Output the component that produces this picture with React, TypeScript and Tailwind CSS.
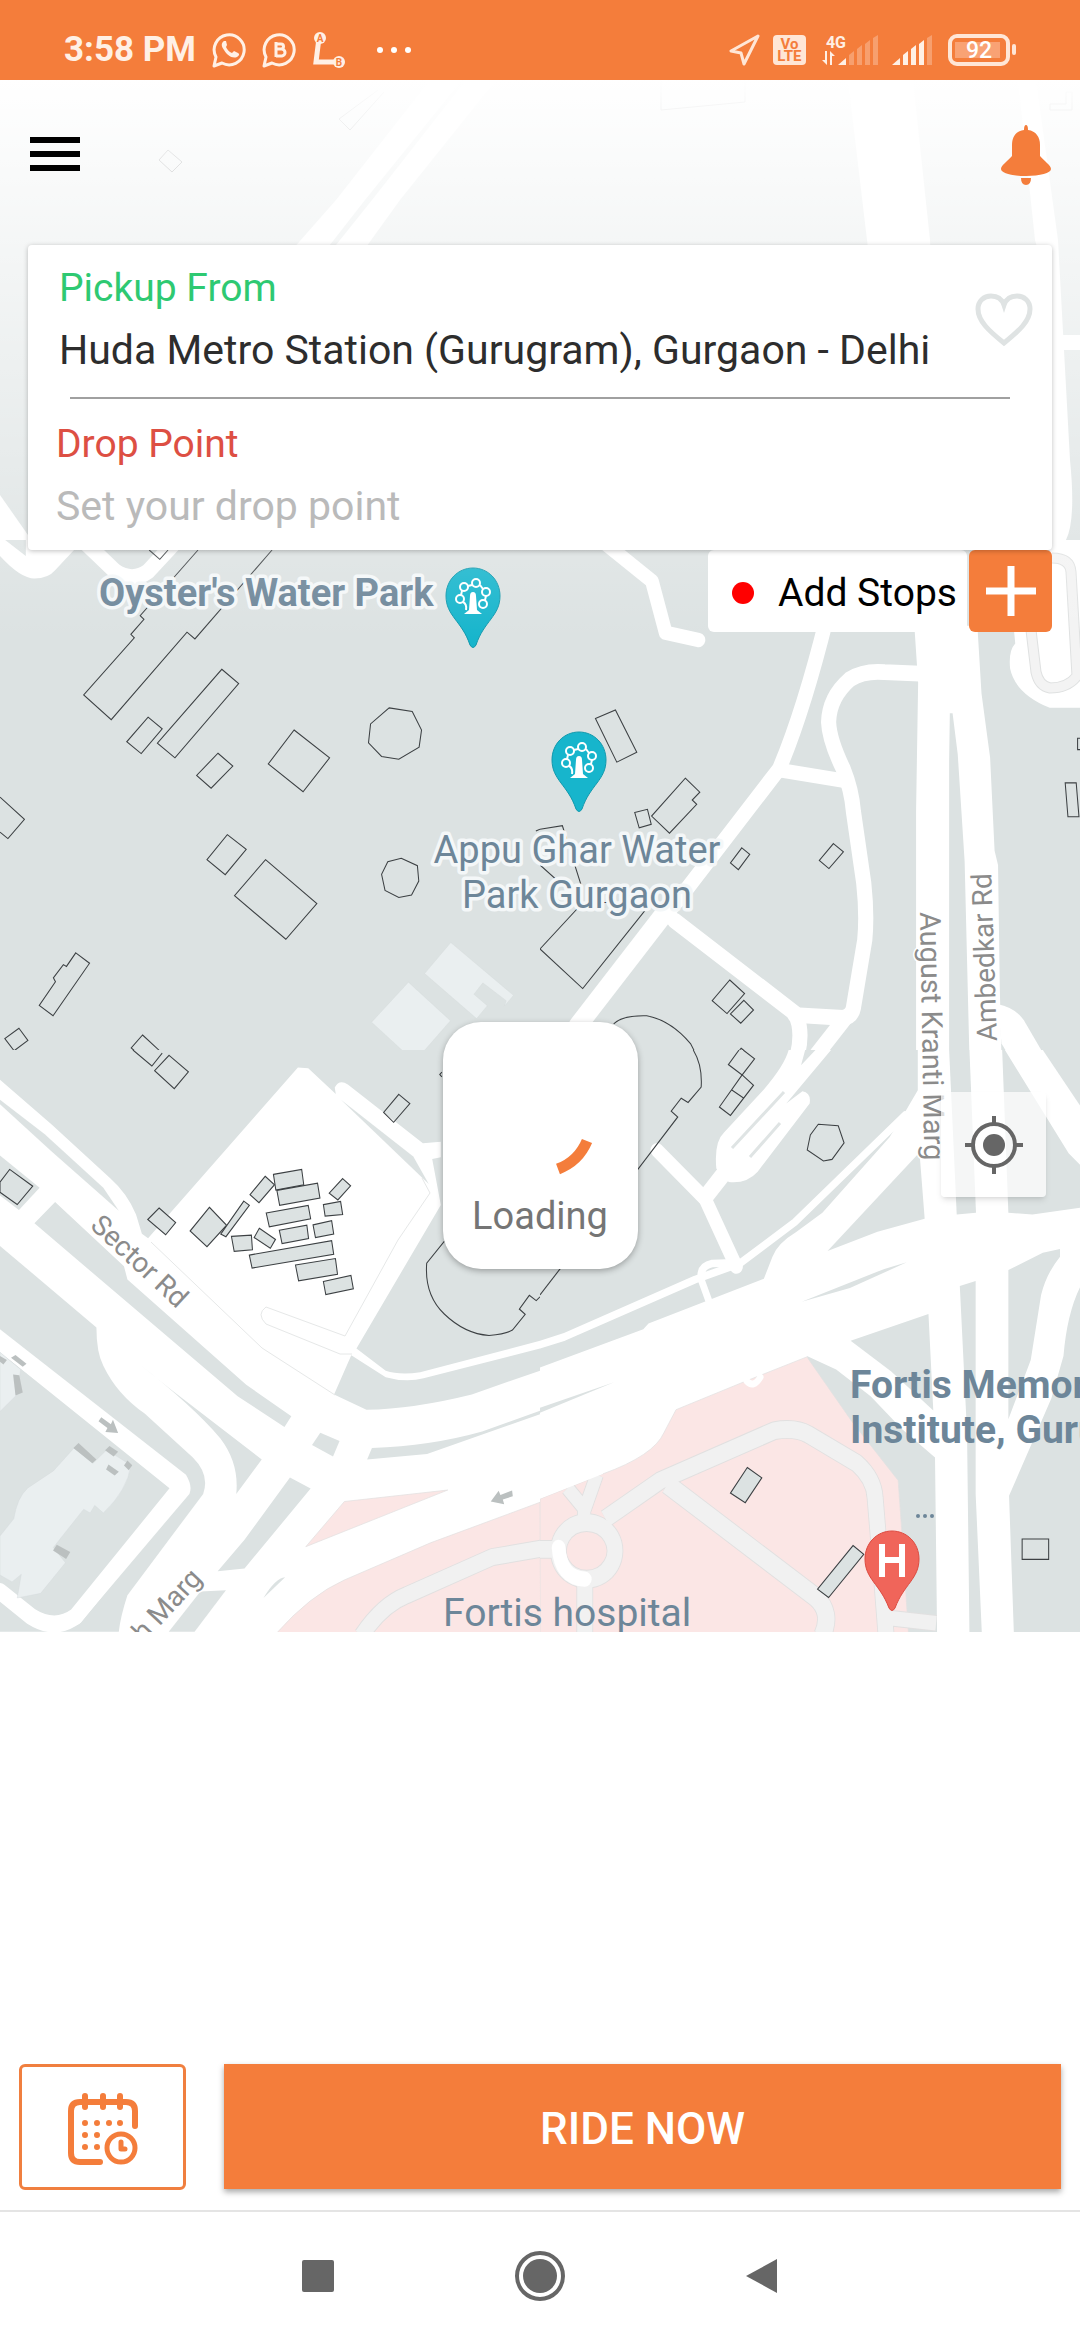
import React, { useState } from 'react';

type Shape = { d: string; width?: number };

interface TileProps {
  x: number;
  y: number;
  width: number;
  height: number;
  base: string;
  land?: string[];
  hospital?: string[];
  hospitalRoads?: Shape[];
  roads?: Shape[];
  areas?: string[];
  blocks?: string[];
  shades?: string[];
  filled?: string[];
  outlines?: string[];
}

const LAND = '#dce2e2';
const PINK = '#fbe6e5';

// Each tile is drawn on its own 1568 x 1568 grid
function Tile({
  x, y, width, height, base,
  land = [], hospital = [], hospitalRoads = [], roads = [], areas = [],
  blocks = [], shades = [], filled = [], outlines = [],
}: TileProps) {
  return (
    <svg x={x} y={y} width={width} height={height} viewBox="0 0 1568 1568" preserveAspectRatio="none">
      <rect width="1568" height="1568" fill={base} />
      {land.map((d) => <path key={d} d={d} fill={LAND} />)}
      {hospital.map((d) => <path key={d} d={d} fill={PINK} stroke="#e2e0e0" strokeWidth="2" />)}
      {hospitalRoads.map((r) => (
        <path key={r.d} d={r.d} fill="none" stroke="#e1e0e0" strokeWidth={(r.width ?? 44) + 5} strokeLinejoin="round" />
      ))}
      {hospitalRoads.map((r) => (
        <path key={r.d + 'f'} d={r.d} fill="none" stroke="#f1f1f1" strokeWidth={r.width ?? 44} strokeLinejoin="round" />
      ))}
      {roads.map((r) => (
        <path key={r.d} d={r.d} fill="none" stroke="#fff" strokeWidth={r.width ?? 44} strokeLinecap="round" strokeLinejoin="round" />
      ))}
      {areas.map((d) => <path key={d} d={d} fill="#fff" />)}
      {blocks.map((d) => <path key={d} d={d} fill="#eaeff0" stroke="#d3d9da" strokeWidth="1" />)}
      {shades.map((d) => <path key={d} d={d} fill="#bbc0c0" />)}
      {filled.map((d) => <path key={d} d={d} fill={LAND} stroke="#3c4043" strokeWidth="3" />)}
      {outlines.map((d) => <path key={d} d={d} fill="none" stroke="#3c4043" strokeWidth="3" />)}
    </svg>
  );
}

function TopTile() {
  return (
    <g>
      <rect y="80" width="1080" height="470" fill={LAND} />
      <g fill="#fff">
        <path d="M336 200 L430 80 H462 L365 200 L326 250 H292Z" />
        <path d="M372 200 L466 80 H496 L400 200 L364 250 H332Z" />
        <path d="M848 80 H913 L930 240 L945 560 H912 L908 550 L867 240Z" />
        <path d="M1018 80 H1036 L1058 240 L1070 460 Q1076 520 1066 540 H1052 V300 L1035 240Z" />
        <path d="M1052 335 H1080 V350 H1052Z" />
        <path d="M0 495 L28 535 V560 H0Z" />
      </g>
      <g fill="none" stroke="#3c4043" strokeWidth="1">
        <path d="M159 160 L168 150 L182 162 L172 172Z" />
        <path d="M378 90 L339 119 L350 130 L384 92" />
        <path d="M661 80 V110 L745 102 V80" />
        <path d="M1050 110 H1072 V92 H1066 V104 H1050Z" />
      </g>
    </g>
  );
}

function ParkPin({ x, y }: { x: number; y: number }) {
  return (
    <g transform={`translate(${x} ${y})`}>
      <path d="M0 0 C-15 0 -27 12 -27 28 C-27 48 -11 53 -3 77 Q0 82 3 77 C11 53 27 48 27 28 C27 12 15 0 0 0Z" fill="#17b5cc" stroke="#1199ad" strokeWidth="1" />
      <g fill="none" stroke="#fff" strokeWidth="2">
        <circle cx="-9" cy="19" r="4" />
        <circle cx="3" cy="15" r="4" />
        <circle cx="13" cy="24" r="4" />
        <circle cx="-13" cy="31" r="4" />
        <circle cx="10" cy="36" r="4" />
        <path d="M-5 18 L-1 17 M7 17 L10 21 M-11 23 L-12 27 M13 28 L12 32 M-10 34 Q-6 36 -7 42" />
      </g>
      <path d="M-3 28 Q-3 24 0 24 Q3 24 3 28 L4 42 L9 46 H-9 L-4 42Z" fill="#fff" />
    </g>
  );
}

function HospitalPin({ x, y }: { x: number; y: number }) {
  return (
    <g transform={`translate(${x} ${y})`}>
      <path d="M0 0 C-15 0 -27 12 -27 28 C-27 48 -12 53 -3 77 Q0 82 3 77 C12 53 27 48 27 28 C27 12 15 0 0 0Z" fill="#f0655a" stroke="#dc4a3f" strokeWidth="1" />
      <path d="M-10 13 V46 M10 13 V46 M-10 29 H10" stroke="#fff" strokeWidth="6" fill="none" />
    </g>
  );
}

function CityMap() {
  return (
    <svg
      className="absolute inset-0 h-full w-full"
      viewBox="0 80 1080 1552"
      preserveAspectRatio="xMidYMin slice"
      role="img"
      aria-label="Map"
    >
      <TopTile />
      <Tile
        x={0} y={540} width={540} height={560} base={LAND}
        areas={['M0 45 Q60 108 100 108 Q140 108 160 85 L215 28 V0 H75 V45 L15 0 H0Z']}
        roads={[{ d: 'M250 10 L335 88 Q385 120 430 88 L505 10' }]}
        blocks={[
          'M1309 1127 L1491 1275 L1465 1305 L1470 1290 L1402 1240 L1376 1272 L1415 1304 L1384 1340 L1233 1214Z',
          'M1186 1238 L1308 1346 L1212 1452 L1186 1430 L1178 1438 L1079 1350Z',
        ]}
        outlines={[
          'M433 28 L464 54 L488 28',
          'M575 28 L407 212 L418 222 L380 264 L390 274 L243 434 L323 503 L543 258 L566 277 L790 28',
          'M644 362 L693 402 L508 610 L457 569Z',
          'M430 496 L471 529 L410 598 L368 565Z',
          'M633 597 L676 633 L613 695 L571 659Z',
          'M854 532 L957 610 L880 705 L779 627Z',
          'M1130 470 L1197 480 L1224 532 L1217 580 L1158 614 L1108 606 L1070 568 L1076 515Z',
          'M1165 891 L1212 912 L1216 955 L1195 994 L1158 1001 L1118 981 L1108 936 L1126 901Z',
          'M0 720 L71 782 L23 836 L0 818',
          'M660 825 L715 866 L654 937 L601 895Z',
          'M771 895 L920 1018 L830 1118 L681 996Z',
          'M220 1156 L260 1185 L154 1332 L114 1303 L161 1237 L155 1226 L184 1189 L193 1194Z',
          'M55 1367 L81 1401 L41 1430 L14 1396Z',
          'M414 1386 L471 1437 L441 1472 L381 1422Z',
          'M1568 810 L1556 815',
        ]}
      />
      <Tile
        x={540} y={540} width={540} height={560} base={LAND}
        roads={[
          { d: 'M190 10 L325 115 L365 260 L460 280', width: 40 },
          { d: 'M832 220 Q765 480 695 640 L400 1010', width: 42 },
          { d: 'M390 1010 L110 1360', width: 54 },
          { d: 'M700 645 L890 675', width: 40 },
          { d: 'M1120 375 L1000 370 Q940 365 900 390 Q840 440 838 510 Q840 560 880 640 Q905 700 910 760 L940 960 Q950 1050 943 1120 L910 1310 Q905 1335 880 1338 L740 1330' },
          { d: 'M390 1065 L740 1325 Q765 1370 748 1440 Q730 1480 640 1568' },
          { d: 'M885 1340 L700 1568' },
        ]}
        areas={[
          'M1087 240 H1270 L1282 430 L1307 610 L1320 870 L1330 910 L1335 1250 L1343 1568 H1250 L1233 900 L1213 600 L1198 485 H1190 L1188 620 V1568 H1092 V760 L1098 400Z',
          'M1330 1300 Q1380 1310 1405 1345 L1540 1568 H1440 L1340 1410Z',
          'M1480 0 H1568 V470 H1480 Q1380 430 1365 360 Q1360 310 1380 290 L1375 240 H1480Z',
        ]}
        outlines={[
          'M161 500 L219 476 L281 594 L223 622Z',
          'M422 667 L464 706 L442 728 L455 740 L376 821 L324 773Z',
          'M275 763 L312 754 L323 796 L288 806Z',
          'M586 862 L609 880 L576 923 L553 904Z',
          'M852 850 L881 873 L839 920 L811 897Z',
          'M551 1232 L594 1270 L543 1326 L500 1290Z',
          'M592 1289 L620 1316 L583 1353 L553 1327Z',
          'M584 1423 L623 1453 L587 1497 L547 1468Z',
          'M214 1355 Q240 1330 310 1332 Q380 1345 437 1410 Q460 1450 463 1480',
          'M0 810 L65 800 L120 968 L75 975 L0 910',
          'M320 1015 H125 L0 1145 L124 1256 L315 1025',
          'M1568 555 H1561 V587 H1568',
          'M1525 680 H1557 L1565 775 H1533Z',
        ]}
      />
      <path d="M1052 558 Q1070 558 1071 572 L1077 676 Q1068 688 1050 688 Q1039 686 1036 672 L1031 630" fill="none" stroke="#dfe1e1" strokeWidth="11" />
      <path d="M1052 558 Q1070 558 1071 572 L1077 676 Q1068 688 1050 688 Q1039 686 1036 672 L1031 630" fill="none" stroke="#f3f3f3" strokeWidth="9" />
      <Tile
        x={0} y={1050} width={540} height={600} base="#fff"
        land={[
          'M0 0 H1568 V760 L1220 842 Q1160 850 1120 838 L1035 780 L1280 405 L1255 285 L1280 280 V240 L1228 244 L1010 90 Q985 75 972 98 L975 115 L895 48 L865 46 L430 492 L412 480 L395 430 Q370 375 320 335 L150 195 L0 78Z',
          'M990 130 L1200 278 L1245 350 Z',
          'M0 130 L130 220 L300 360 L345 420 L150 265 L0 142Z',
          'M0 276 L115 360 L55 418 L0 380Z',
          'M160 397 L360 565 L370 600 L715 875 L846 957 L826 985 L690 905 L100 453Z',
          'M0 512 L280 725 Q280 790 300 825 Q340 900 420 950 L560 1065 Q610 1110 590 1160 L370 1425 Q350 1480 345 1520 H0 V1430 L90 1490 Q150 1530 230 1500 L550 1160 Q560 1140 540 1110 L0 730Z',
          'M0 790 L505 1142 L190 1490 Q160 1505 110 1475 L0 1400Z',
          'M400 818 L500 890 L760 1070 L686 1160 Q695 1080 640 1015 Q560 930 400 818Z',
          'M1020 798 L1120 855 Q1180 870 1230 858 L1568 780 V838 L1370 900 Q1200 938 1064 940 L970 900Z',
          'M930 1000 L986 1022 L967 1062 L906 1032Z',
          'M1080 1040 Q1250 1035 1400 997 L1568 943 V952 L1240 1056 L1066 1070Z',
          'M842 1117 L902 1146 L710 1355 L632 1362 L710 1280Z',
          'M582 1415 L656 1412 L565 1520 H490Z',
          'M765 1432 Q800 1380 828 1378Z',
        ]}
        hospital={[
          'M1000 1180 L1300 1150 L888 1298Z',
          'M1568 1182 L1250 1288 L1000 1385 Q900 1425 802 1525 H1570Z',
        ]}
        hospitalRoads={[{ d: 'M1050 1530 Q1110 1450 1180 1425 L1430 1325 L1580 1302', width: 42 }]}
        roads={[{ d: 'M0 1415 L90 1480 Q160 1520 220 1480 L525 1142 L0 762', width: 44 }]}
        blocks={[
          'M0 790 L60 835 L50 900 L0 945Z',
          'M215 1040 L270 1080 L310 1045 L380 1085 Q370 1150 300 1210 L275 1190 L262 1210 L243 1200 L155 1300 L190 1340 L118 1420 L50 1432 L62 1370 L35 1390 L0 1372 V1270 L40 1225 Q50 1170 80 1145 L155 1100Z',
        ]}
        shades={[
          'M228 1027 L280 1070 L268 1080 L213 1040Z',
          'M318 1035 L343 1050 L330 1062 L305 1046Z',
          'M315 1083 L345 1102 L333 1112 L308 1096Z',
          'M370 1073 L384 1085 L374 1098 L360 1086Z',
          'M165 1293 L204 1312 L192 1330 L154 1308Z',
          'M45 797 L77 820 L66 828 L32 804Z',
          'M38 848 L56 850 L66 895 L45 903Z',
          'M0 800 L20 810 L10 822 L0 815Z',
          'M294 960 L322 978 L328 966 L343 1001 L306 998 L312 988 L286 970Z',
          'M1487 1151 L1489 1166 L1460 1175 L1464 1187 L1425 1180 L1448 1152 L1453 1163Z',
        ]}
        filled={[
          'M28 312 L95 356 L50 404 L0 372 V345Z',
          'M462 413 L510 451 L481 483 L429 443Z',
          'M608 411 L658 458 L601 514 L552 473Z',
          'M708 395 L724 406 L656 488 L641 481Z',
          'M770 330 L797 352 L752 399 L726 378Z',
          'M794 325 L876 312 L882 352 L801 366Z',
          'M804 367 L922 348 L929 387 L812 406Z',
          'M995 336 L1018 355 L981 392 L956 374Z',
          'M939 404 L989 396 L995 430 L944 434Z',
          'M773 426 L895 406 L902 441 L782 462Z',
          'M811 471 L891 458 L896 493 L819 506Z',
          'M909 457 L963 446 L969 481 L916 490Z',
          'M753 466 L800 495 L785 518 L738 490Z',
          'M672 487 L730 484 L733 522 L680 526Z',
          'M724 536 L963 498 L969 534 L732 570Z',
          'M858 562 L974 545 L980 586 L867 603Z',
          'M939 605 L1019 589 L1026 624 L946 639Z',
        ]}
        outlines={[
          'M386 0 L441 42 L471 8',
          'M491 14 L547 57 L506 101 L449 54Z',
          'M1158 116 L1190 140 L1143 189 L1114 163Z',
          'M1283 58 L1277 64 L1283 70',
          'M1290 500 L1239 557 Q1232 640 1290 690 Q1350 742 1420 746 Q1470 742 1488 732 L1525 691 L1508 677 L1537 641 L1557 655 L1568 645',
        ]}
      />
      <path d="M151 1242 L262 1348 L335 1395 M352 1354 L340 1354 L266 1324 Q256 1314 266 1307 L345 1336 L398 1240 L430 1193 L422 1178" fill="none" stroke="#e6e8e8" strokeWidth="1" />
      <Tile
        x={540} y={1050} width={540} height={600} base="#fff"
        land={[
          'M0 0 H1097 V105 L1055 170 L1015 228 L820 425 L745 475 Q690 505 675 540 L650 598 L315 715 L300 730 L0 830Z',
          'M835 525 L1102 268 L1117 441 L980 475Z',
          'M1188 0 H1247 L1266 425 L1210 430Z',
          'M1342 0 H1350 L1535 270 L1568 300 V412 L1430 430 L1360 425Z',
          'M1460 0 H1568 V145Z',
          'M1360 575 L1460 530 L1510 520 V540 Q1470 585 1455 640 L1425 810 L1360 965Z',
          'M1219 617 L1265 604 V1160 L1283 1525 H1247 L1240 1000Z',
          'M902 760 L1128 690 L1142 942 L1020 840Z',
          'M1568 620 Q1530 690 1520 800 L1485 910 L1362 1165 L1376 1525 H1568Z',
          'M775 800 L860 835 L960 905 L1050 990 L1147 1065 L1153 1525 H1030Z',
          'M760 658 L1000 572 L1065 555 L900 622Z',
          'M0 935 L215 868 L0 948Z',
        ]}
        hospital={['M0 1173 L182 1108 Q330 1060 360 1000 L395 940 L590 868 L775 802 L905 970 L1040 1125 L1050 1250 L1070 1525 H0Z']}
        hospitalRoads={[
          { d: 'M190 1225 L350 1125 L680 995 Q740 985 780 1005 L920 1080 Q970 1120 973 1170 L985 1300 L1005 1530' },
          { d: 'M370 1135 L800 1430 Q850 1470 820 1530', width: 48 },
          { d: 'M80 1145 L130 1200 L165 1110 M128 1190 V1230', width: 36 },
          { d: 'M0 1305 H50 M130 1390 V1530' },
          { d: 'M136 1235 A82 74 0 1 1 135 1235Z' },
          { d: 'M1020 1485 L1150 1498', width: 38 },
        ]}
        roads={[
          { d: 'M0 770 L70 750 L450 600 L580 558 L740 450 L1060 170', width: 20 },
          { d: 'M340 262 L480 390 L570 566', width: 38 },
          { d: 'M480 385 L545 310', width: 44 },
          { d: 'M560 556 L500 558 Q462 565 468 600 L490 655', width: 20 },
          { d: 'M54 1300 Q60 1380 130 1383', width: 40 },
          { d: 'M600 865 Q620 885 640 855', width: 18 },
        ]}
        areas={[
          'M722 0 Q710 40 650 103 L535 215 Q505 240 512 310 L548 345 Q600 350 632 318 L783 140 Q788 112 762 108 L715 140 L845 0 H800 L758 40 L770 0Z',
          'M0 1173 L182 1108 L200 1060 H0Z',
        ]}
        filled={[
          'M602 1091 L644 1118 L596 1183 L553 1158Z',
          'M909 1295 L940 1318 L838 1431 L806 1409Z',
        ]}
        outlines={[
          'M445 0 Q472 40 468 97 L430 137 L410 126 L381 160 L400 175 L283 313',
          'M60 570 L0 640',
          'M578 0 L547 38 L587 65 L623 23 L590 0',
          'M587 65 L620 92 L553 171 L521 149Z M556 104 L592 126',
          'M808 194 L866 198 L883 243 L848 286 L823 290 L776 261 L785 222Z',
          'M1400 1278 H1477 V1331 H1400Z',
        ]}
      />
      {/* slivers between the lanes of the slip road */}
      <path d="M732 1148 L784 1092 M750 1157 L780 1123" stroke="#dfe4e4" strokeWidth="3" />

      <g fontFamily="Roboto, sans-serif" fontSize="28" fill="#8b8b8b" stroke="#fff" strokeWidth="3" paintOrder="stroke">
        <text transform="translate(920 912) rotate(89)" fontSize="29">August Kranti Marg</text>
        <text transform="translate(997 1041) rotate(-92)">Ambedkar Rd</text>
        <text transform="translate(89 1227) rotate(43)">Sector Rd</text>
        <text transform="translate(144 1643) rotate(-47)">h Marg</text>
      </g>
      <g fontFamily="Roboto, sans-serif" fontSize="38" fill="#6d8699" stroke="#f4f7f8" strokeWidth="7" strokeLinejoin="round" paintOrder="stroke">
        <text x="99" y="606" fontWeight="700">Oyster's Water Park</text>
        <text x="577" y="863" textAnchor="middle">Appu Ghar Water</text>
        <text x="577" y="908" textAnchor="middle">Park Gurgaon</text>
      </g>
      <g fontFamily="Roboto, sans-serif" fontSize="39" fill="#6d8699">
        <text x="443" y="1626">Fortis hospital</text>
        <text x="850" y="1398" fontWeight="700">Fortis Memorial</text>
        <text x="850" y="1443" fontWeight="700">Institute, Gurugram</text>
        <g>
          <circle cx="918" cy="1516" r="2" />
          <circle cx="925" cy="1516" r="2" />
          <circle cx="932" cy="1516" r="2" />
        </g>
      </g>
      <ParkPin x={473} y={568} />
      <ParkPin x={579} y={732} />
      <HospitalPin x={892} y={1531} />
    </svg>
  );
}

function ChatBubble({ children }: { children: React.ReactNode }) {
  return (
    <svg width="36" height="36" viewBox="0 0 36 36" fill="none" stroke="#fff0e5" strokeWidth="3">
      <path d="M2 34 L4 25 A15 15 0 1 1 10 31Z" strokeLinejoin="round" />
      {children}
    </svg>
  );
}

function Signal({ level }: { level: number }) {
  const bars = ['M0 30 L8 23 V30Z', 'M11 20 L16 16 V30 H11Z', 'M19 14 L24 10 V30 H19Z', 'M27 9 L32 5 V30 H27Z', 'M35 3 L40 0 V30 H35Z'];
  return (
    <svg width="40" height="30" viewBox="0 0 40 30" fill="#fff0e5">
      {bars.map((d, i) => <path key={d} d={d} opacity={i < level ? 1 : 0.3} />)}
    </svg>
  );
}

function StatusBar() {
  return (
    <header className="flex h-20 items-center justify-between bg-[#f47d3b] pt-5 pr-16 pl-16 text-[#fff0e5]">
      <div className="flex items-center">
        <span className="mr-4 text-[35px] leading-10 font-bold">3:58 PM</span>
        <div className="flex items-center gap-[14px]">
          <ChatBubble>
            <path d="M12 9 C9 11 9 14 12 18 C15 23 20 27 25 25 C27 24 28 22 26 21 L22 19 L20 21 C17 20 15 17 14 15 L15 13 L14 9Z" fill="#fff0e5" stroke="none" />
          </ChatBubble>
          <ChatBubble>
            <path d="M14 10 V25 M14 12 H19 A2 2 0 0 1 19 17 H14 M19 17 A3 3 0 0 1 20 24 H14" />
          </ChatBubble>
          <svg width="36" height="36" viewBox="0 0 36 36" fill="none">
            <path d="M7 6 L4 30 H26" stroke="#fff0e5" strokeWidth="5" />
            <circle cx="8" cy="6" r="6" fill="#fff0e5" />
            <circle cx="27" cy="30" r="6" fill="#fff0e5" />
            <text x="8" y="10" textAnchor="middle" fontSize="10" fontWeight="700" fill="#f47d3b">A</text>
            <text x="27" y="34" textAnchor="middle" fontSize="10" fontWeight="700" fill="#f47d3b">B</text>
          </svg>
        </div>
        <svg className="ml-7" width="36" height="8" viewBox="0 0 36 8" fill="#fff">
          <circle cx="4" cy="4" r="3" />
          <circle cx="18" cy="4" r="3" />
          <circle cx="32" cy="4" r="3" />
        </svg>
      </div>
      <div className="flex items-center">
        <svg className="mr-3" width="32" height="32" viewBox="0 0 32 32" fill="none" stroke="#ffe6d6" strokeWidth="3" strokeLinejoin="round">
          <path d="M29 2 L2 17 L12 19 L15 30Z" />
        </svg>
        <span className="flex h-[30px] w-[33px] flex-col items-center justify-center rounded-sm bg-[#ffe6d6] text-[15px] leading-3 font-bold text-[#f47d3b]">
          <span>Vo</span>
          <span>LTE</span>
        </span>
        <div className="ml-4 flex flex-col">
          <span className="ml-1 text-[16px] leading-4 font-bold">4G</span>
          <svg width="14" height="14" viewBox="0 0 14 14" fill="#fff0e5">
            <path d="M3 0 H5 V14 L0 9 H3Z M8 0 L13 5 H10 V14 H8Z" />
          </svg>
        </div>
        <div className="-ml-2 flex gap-[14px]">
          <Signal level={1} />
          <Signal level={4} />
        </div>
        <svg className="ml-4" width="68" height="32" viewBox="0 0 68 32">
          <rect x="2" y="2" width="58" height="28" rx="7" fill="none" stroke="#ffe6d6" strokeWidth="4" />
          <rect x="7" y="8" width="45" height="16" fill="#f9a274" />
          <rect x="64" y="10" width="4" height="11" rx="2" fill="#ffe6d6" />
          <text x="31" y="24" textAnchor="middle" fontSize="23" fontWeight="500" fill="#fff">92</text>
        </svg>
      </div>
    </header>
  );
}

function TripCard() {
  const [drop, setDrop] = useState('');
  return (
    <div className="relative h-[305px] rounded-sm bg-white px-7 pt-5 shadow-[0_1px_5px_rgba(0,0,0,0.25)]">
      <label htmlFor="pickup" className="ml-[3px] block text-[39px] leading-[46px] text-[#2ec972]">Pickup From</label>
      <input
        id="pickup"
        readOnly
        value="Huda Metro Station (Gurugram), Gurgaon - Delhi"
        className="mt-4 ml-[3px] block h-[46px] w-[890px] text-[41px] leading-[46px] text-[#2d2d2d] outline-none"
      />
      <hr className="mt-6 mr-[14px] ml-[14px] border-t-2 border-[#a0a0a0]" />
      <label htmlFor="drop" className="mt-[22px] block text-[39px] leading-[46px] text-[#dd4f43]">Drop Point</label>
      <input
        id="drop"
        value={drop}
        onChange={(e) => setDrop(e.target.value)}
        placeholder="Set your drop point"
        className="mt-4 block h-[46px] w-full text-[41px] leading-[46px] text-[#2d2d2d] outline-none placeholder:text-[#bababa]"
      />
      <button aria-label="Save as favourite" className="absolute top-12 right-[18px]">
        <svg width="60" height="54" viewBox="0 0 58 54" fill="none" stroke="#dfe3e3" strokeWidth="5">
          <path d="M29 50 C14 38 3 28 3 16 C3 8 9 3 16 3 C22 3 27 6 29 12 C31 6 36 3 42 3 C49 3 55 8 55 16 C55 28 44 38 29 50Z" />
        </svg>
      </button>
    </div>
  );
}

function MapPanel() {
  return (
    <section className="relative flex flex-1 flex-col overflow-hidden">
      <CityMap />
      <div className="absolute inset-x-0 top-0 h-[560px] bg-linear-to-b from-white to-white/0" />
      <div className="relative flex flex-1 flex-col px-7">
        <div className="flex h-[165px] items-start justify-between pt-[45px]">
          <button aria-label="Menu" className="mt-3 ml-[2px] flex flex-col gap-2">
            <span className="h-[6px] w-[50px] bg-black" />
            <span className="h-[6px] w-[50px] bg-black" />
            <span className="h-[6px] w-[50px] bg-black" />
          </button>
          <button aria-label="Notifications">
            <svg width="52" height="60" viewBox="0 0 52 60" fill="#f47d3b">
              <path d="M26 0 Q28 0 28 5 C36 6 40 12 40 20 V31 C44 36 51 40 51 44 C51 48 40 51 26 51 C12 51 1 48 1 44 C1 40 8 36 12 31 V20 C12 12 16 6 24 5 Q24 0 26 0Z" />
              <path d="M21 53 H31 Q31 60 26 60 Q21 60 21 53Z" />
            </svg>
          </button>
        </div>
        <TripCard />
        <div className="flex h-[82px] justify-end gap-[2px]">
          <div className="flex w-[259px] items-center rounded-md bg-white pt-1 pl-6 text-[39px] whitespace-nowrap text-black">
            <span className="mr-6 h-[22px] w-[22px] rounded-full bg-[#ff0000]" />
            Add Stops
          </div>
          <button aria-label="Add stop" className="flex w-[83px] items-center justify-center rounded-md bg-[#f47d3b]">
            <svg width="50" height="50" viewBox="0 0 50 50" stroke="#fff" strokeWidth="7">
              <path d="M25 0 V50 M0 25 H50" />
            </svg>
          </button>
        </div>
        <button aria-label="My location" className="mt-[460px] mr-[6px] flex h-[105px] w-[105px] items-center justify-center self-end rounded-sm bg-white/70 shadow-md">
          <svg width="60" height="60" viewBox="0 0 60 60" fill="none" stroke="#666" strokeWidth="4">
            <circle cx="30" cy="30" r="21" />
            <circle cx="30" cy="30" r="11" fill="#666" stroke="none" />
            <path d="M30 1 V9 M30 51 V59 M1 30 H9 M51 30 H59" />
          </svg>
        </button>
      </div>
    </section>
  );
}

function BookingBar() {
  return (
    <section className="flex gap-[38px] rounded-t-lg bg-white px-[19px] pt-[432px] pb-5">
      <button aria-label="Schedule a ride" className="flex h-[126px] w-[167px] items-center justify-center rounded-md border-3 border-[#f07f3f] bg-white pt-1">
        <svg width="70" height="72" viewBox="0 0 70 72" fill="none" stroke="#f47d3b" strokeWidth="6" strokeLinecap="round">
          <path d="M67 33 V18 Q67 9 58 9 H12 Q3 9 3 18 V60 Q3 69 12 69 H32" />
          <path d="M17 3 V14 M35 3 V14 M52 3 V14" />
          <circle cx="53" cy="55" r="14" strokeWidth="5" />
          <path d="M53 49 V56 H57" strokeWidth="5" strokeLinejoin="round" />
          <path d="M17 30 V30 M29 30 V30 M41 30 V30 M52 30 V30 M17 42 V42 M29 42 V42 M17 54 V54 M29 54 V54" />
        </svg>
      </button>
      <button className="h-[125px] flex-1 bg-[#f47d3b] pt-1 text-[44px] font-medium text-white shadow-[0_3px_6px_rgba(0,0,0,0.35)]">RIDE NOW</button>
    </section>
  );
}

function NavBar() {
  return (
    <nav className="flex h-[130px] items-center justify-center gap-[181px] border-t-2 border-[#e4e4e4] bg-white">
      <button aria-label="Recent apps" className="h-8 w-8 rounded-xs bg-[#666]" />
      <button aria-label="Home" className="flex h-[50px] w-[50px] items-center justify-center rounded-full border-4 border-[#666]">
        <span className="h-[34px] w-[34px] rounded-full bg-[#666]" />
      </button>
      <button aria-label="Back">
        <svg width="32" height="36" viewBox="0 0 32 36" fill="#666">
          <path d="M31 1 V35 L0 18Z" />
        </svg>
      </button>
    </nav>
  );
}

export default function App() {
  return (
    <div className="flex min-h-screen flex-col bg-white font-[Roboto,sans-serif]">
      <StatusBar />
      <main className="relative flex flex-1 flex-col">
        <MapPanel />
        <BookingBar />
        <div className="pointer-events-none absolute inset-0 flex items-center justify-center">
          <div role="status" className="flex h-[247px] w-[195px] flex-col items-center justify-end rounded-[38px] bg-white pb-[30px] shadow-[0_2px_6px_rgba(0,0,0,0.3)]">
            <svg width="120" height="120" viewBox="0 0 120 120" fill="none" stroke="#f47d3b" strokeWidth="11">
              <path d="M107 80 A51 51 0 0 1 78 108" />
            </svg>
            <span className="mt-3 text-[38px] leading-[46px] text-[#757575]">Loading</span>
          </div>
        </div>
      </main>
      <NavBar />
    </div>
  );
}
